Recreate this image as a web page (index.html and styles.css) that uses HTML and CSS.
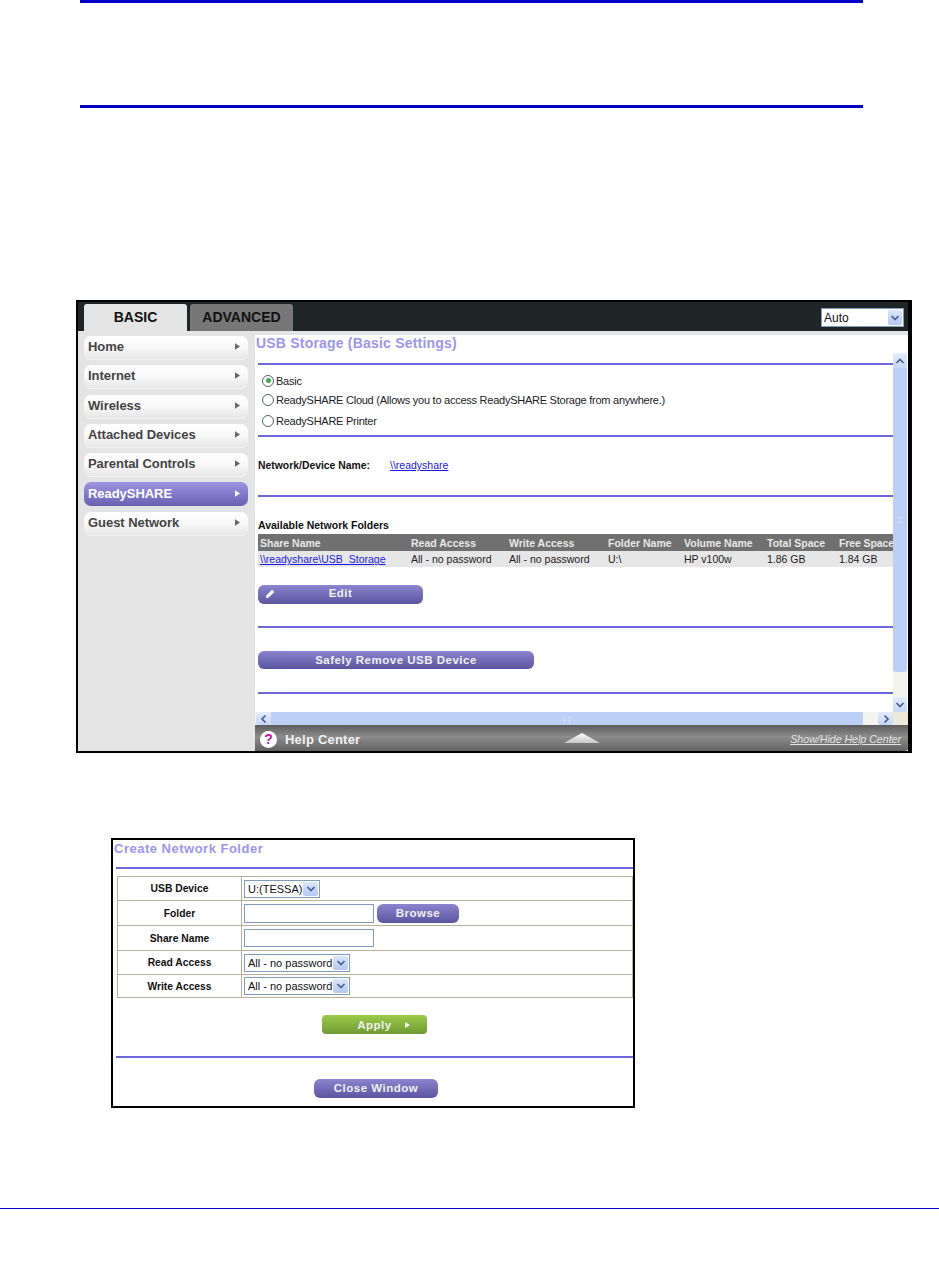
FILE: index.html
```html
<!DOCTYPE html>
<html lang="en">
<head>
<meta charset="utf-8">
<title>USB Storage (Basic Settings)</title>
<link rel="stylesheet" href="styles.css">
</head>
<body>
<svg class="defs" width="0" height="0" aria-hidden="true">
  <symbol id="down" viewBox="0 0 10 10"><path d="M1.500 3 5 6.500 8.500 3" fill="none" stroke="#44608e" stroke-width="1.700"/></symbol>
  <symbol id="up" viewBox="0 0 10 10"><path d="M1.500 7 5 3.500 8.500 7" fill="none" stroke="#44608e" stroke-width="1.700"/></symbol>
  <symbol id="left" viewBox="0 0 10 10"><path d="M6.500 1.500 3 5l3.500 3.500" fill="none" stroke="#44608e" stroke-width="1.700"/></symbol>
  <symbol id="right" viewBox="0 0 10 10"><path d="M3.500 1.500 7 5 3.500 8.500" fill="none" stroke="#44608e" stroke-width="1.700"/></symbol>
  <symbol id="tri" viewBox="0 0 6 8"><path d="M0 0 6 4 0 8z"/></symbol>
</svg>

<div class="note-box"></div>

<section class="window">
  <header class="topbar">
    <div class="tabs">
      <div class="tab tab-on">BASIC</div>
      <div class="tab tab-off">ADVANCED</div>
    </div>
    <div class="select select-auto"><span class="select-text">Auto</span><span class="select-btn"><svg class="chev"><use href="#down"/></svg></span></div>
  </header>
  <div class="shell">
    <nav class="side">
      <a class="nav">Home<svg class="nav-tri"><use href="#tri"/></svg></a>
      <a class="nav">Internet<svg class="nav-tri"><use href="#tri"/></svg></a>
      <a class="nav">Wireless<svg class="nav-tri"><use href="#tri"/></svg></a>
      <a class="nav">Attached Devices<svg class="nav-tri"><use href="#tri"/></svg></a>
      <a class="nav">Parental Controls<svg class="nav-tri"><use href="#tri"/></svg></a>
      <a class="nav nav-on">ReadySHARE<svg class="nav-tri"><use href="#tri"/></svg></a>
      <a class="nav">Guest Network<svg class="nav-tri"><use href="#tri"/></svg></a>
    </nav>
    <main class="main">
      <h1 class="title">USB Storage (Basic Settings)</h1>
      <div class="view">
        <div class="content">
          <hr class="rule rule-1">
          <div class="radio-row radio-basic"><span class="radio radio-on"></span>Basic</div>
          <div class="radio-row"><span class="radio"></span>ReadySHARE Cloud (Allows you to access ReadySHARE Storage from anywhere.)</div>
          <div class="radio-row radio-last"><span class="radio"></span>ReadySHARE Printer</div>
          <hr class="rule rule-2">
          <div class="device"><b class="device-label">Network/Device Name:</b><a class="link">\\readyshare</a></div>
          <hr class="rule rule-3">
          <h2 class="folders">Available Network Folders</h2>
          <div class="table-clip">
            <table class="grid">
              <colgroup><col class="c1"><col class="c2"><col class="c3"><col class="c4"><col class="c5"><col class="c6"><col class="c7"></colgroup>
              <thead><tr><th>Share Name</th><th>Read Access</th><th>Write Access</th><th>Folder Name</th><th>Volume Name</th><th>Total Space</th><th class="th-last">Free Space</th></tr></thead>
              <tbody><tr><td><a class="link">\\readyshare\USB_Storage</a></td><td>All - no password</td><td>All - no password</td><td>U:\</td><td>HP v100w</td><td>1.86 GB</td><td>1.84 GB</td></tr></tbody>
            </table>
          </div>
          <div class="btn btn-edit">
            <svg class="pencil" viewBox="0 0 12 12"><path d="M1 11l.8-3.400L7.800 1.600a1 1 0 0 1 1.400 0l1.200 1.200a1 1 0 0 1 0 1.400L4.400 10.200z" fill="#fff"/></svg>
            Edit
          </div>
          <hr class="rule rule-4">
          <div class="btn btn-remove">Safely Remove USB Device</div>
          <hr class="rule rule-5">
        </div>
        <div class="vscroll">
          <span class="sb-btn sb-v"><svg class="chev"><use href="#up"/></svg></span>
          <span class="vthumb"><i class="grip-v"></i></span>
          <span class="vtrack"></span>
          <span class="sb-btn sb-v"><svg class="chev"><use href="#down"/></svg></span>
        </div>
      </div>
      <div class="hscroll">
        <span class="sb-btn sb-h"><svg class="chev"><use href="#left"/></svg></span>
        <span class="hthumb"><i class="grip-h"></i></span>
        <span class="htrack"></span>
        <span class="sb-btn sb-h"><svg class="chev"><use href="#right"/></svg></span>
        <span class="corner"></span>
      </div>
      <footer class="help">
        <span class="help-icon">?</span>
        <b class="help-title">Help Center</b>
        <svg class="help-tri" viewBox="0 0 36 10"><path d="M0 10 18 0l18 10z" fill="url(#tg)"/><defs><linearGradient id="tg" x1="0" y1="0" x2="0" y2="1"><stop offset="0" stop-color="#fff"/><stop offset="1" stop-color="#c8c8c8"/></linearGradient></defs></svg>
        <a class="help-link">Show/Hide Help Center</a>
      </footer>
    </main>
  </div>
</section>

<section class="dialog">
  <h2 class="dialog-title">Create Network Folder</h2>
  <hr class="rule dialog-rule">
  <table class="form">
    <tr class="row-24"><th>USB Device</th><td><div class="select select-usb"><span class="select-text">U:(TESSA)</span><span class="select-btn"><svg class="chev"><use href="#down"/></svg></span></div></td></tr>
    <tr class="row-25"><th>Folder</th><td class="with-btn"><div class="input"></div><div class="btn btn-browse">Browse</div></td></tr>
    <tr class="row-25"><th>Share Name</th><td><div class="input"></div></td></tr>
    <tr class="row-24"><th>Read Access</th><td><div class="select select-acc"><span class="select-text">All - no password</span><span class="select-btn"><svg class="chev"><use href="#down"/></svg></span></div></td></tr>
    <tr class="row-23"><th>Write Access</th><td><div class="select select-acc"><span class="select-text">All - no password</span><span class="select-btn"><svg class="chev"><use href="#down"/></svg></span></div></td></tr>
  </table>
  <div class="btn btn-apply">Apply<svg class="apply-tri"><use href="#tri"/></svg></div>
  <hr class="rule dialog-rule-2">
  <div class="btn btn-close">Close Window</div>
</section>

<div class="page-foot"></div>
</body>
</html>
```

FILE: styles.css
```css
* { box-sizing: border-box; }
html, body { margin: 0; padding: 0; }
body {
  width: 939px;
  height: 1278px;
  background: #fff;
  font-family: "Liberation Sans", Arial, sans-serif;
  overflow: hidden;
}
.defs { display: block; height: 0; }

.note-box {
  width: 783px;
  height: 108px;
  margin: 0 0 0 80px;
  border-top: 3px solid #0000c8;
  border-bottom: 3px solid #0000c8;
}

/* Router window */
.window {
  width: 836px;
  height: 453px;
  margin: 192px 0 0 76px;
  border: solid #000;
  border-width: 2px 4px 2px 2px;
  display: flex;
  flex-direction: column;
}
.topbar {
  height: 29px;
  background: #1f2427;
  display: flex;
  justify-content: space-between;
  padding: 2px 4px 0 6px;
  flex: none;
}
.tabs { display: flex; gap: 3px; }
.tab {
  width: 103px;
  height: 27px;
  border-radius: 3px 3px 0 0;
  font-size: 14px;
  font-weight: 700;
  line-height: 26px;
  text-align: center;
  color: #111;
}
.tab-on { background: #e4e4e4; }
.tab-off { background: #777; }

.select {
  display: flex;
  align-items: center;
  background: #fff;
  border: 1px solid #7f9db9;
  font-size: 12px;
  color: #111;
}
.select-text { flex: 1; padding-left: 2px; white-space: nowrap; }
.select-btn {
  width: 15px;
  align-self: stretch;
  margin: 1px;
  background: linear-gradient(#dbe6fb, #b4c8f2);
  border-radius: 2px;
  display: flex;
  align-items: center;
  justify-content: center;
}
.chev { width: 10px; height: 10px; display: block; }
.select-auto { width: 83px; height: 19px; margin-top: 4px; }
.select-auto .select-btn { width: 14px; }

.shell { flex: 1; display: flex; min-height: 0; }

/* Sidebar */
.side {
  width: 177px;
  flex: none;
  background: #e4e4e4;
  padding: 5px 7px 0 6px;
  display: flex;
  flex-direction: column;
  gap: 5.300px;
}
.nav {
  height: 24px;
  border-radius: 7px;
  background: linear-gradient(#fff 0%, #f8f8f8 50%, #e6e6e6 100%);
  border-bottom: 1px solid #f4f4f4;
  display: flex;
  align-items: center;
  justify-content: space-between;
  padding: 0 8px 2px 4px;
  font-size: 13px;
  font-weight: 700;
  letter-spacing: -.05px;
  color: #444;
}
.nav-tri { width: 5px; height: 7px; fill: #666; }
.nav-on {
  background: linear-gradient(#9d94e2, #6a60b2);
  border-bottom: 0;
  color: #fff;
}
.nav-on .nav-tri { fill: #fff; }

/* Main */
.main {
  flex: 1;
  min-width: 0;
  border-top: 4px solid #e4e4e4;
  background: #fff;
  display: flex;
  flex-direction: column;
}
.title {
  height: 18px;
  margin: 0;
  padding-left: 1px;
  flex: none;
  font-size: 14px;
  font-weight: 700;
  line-height: 16px;
  letter-spacing: .2px;
  color: #9c95f2;
}
.view { height: 359px; flex: none; display: flex; }
.content { width: 638px; padding-left: 3px; overflow: hidden; }

.rule {
  height: 2px;
  margin: 0;
  border: 0;
  background: #6f68dc;
}
.rule-1 { margin-top: 10px; }
.rule-2 { margin-top: 5px; }
.rule-3 { margin-top: 58px; }
.rule-4 { margin-top: 22px; }
.rule-5 { margin-top: 23px; }

.radio-row {
  height: 20px;
  display: flex;
  align-items: center;
  padding-left: 4px;
  font-size: 11px;
  letter-spacing: -.25px;
  color: #222;
}
.radio-basic { margin-top: 6px; height: 19px; }
.radio-last { height: 19px; margin-top: 1px; }
.radio {
  width: 12px;
  height: 12px;
  margin-right: 2px;
  border-radius: 50%;
  border: 1px solid #4d6272;
  background: #fff;
  flex: none;
  display: flex;
  align-items: center;
  justify-content: center;
}
.radio-on::after {
  content: "";
  width: 5px;
  height: 5px;
  border-radius: 50%;
  background: #3fa84f;
}

.device {
  height: 58px;
  margin-bottom: -58px;
  display: flex;
  align-items: center;
  font-size: 10.500px;
  color: #111;
  position: relative;
  top: -1px;
}
.device-label { width: 132px; font-size: 10.400px; flex: none; }
.link { color: #1a1ae6; text-decoration: underline; }
.device .link { font-size: 10.500px; }

.folders {
  margin: 22px 0 0;
  height: 15px;
  font-size: 10.500px;
  font-weight: 700;
  line-height: 13px;
  color: #111;
}
.table-clip { width: 636px; margin-top: 0; overflow: hidden; }
.grid {
  width: 640px;
  table-layout: fixed;
  border-collapse: collapse;
  font-size: 11px;
}
.c1 { width: 151px; }
.c2 { width: 98px; }
.c3 { width: 99px; }
.c4 { width: 76px; }
.c5 { width: 83px; }
.c6 { width: 72px; }
.c7 { width: 61px; }
.grid th {
  height: 17px;
  padding: 0 0 0 2px;
  background: #707070;
  color: #e8e8e8;
  font-size: 10.500px;
  font-weight: 700;
  text-align: left;
  white-space: nowrap;
}
.grid .th-last { letter-spacing: -.1px; }
.grid td {
  height: 16px;
  padding: 0 0 0 2px;
  background: #e6e6e6;
  color: #222;
  font-size: 10.500px;
  white-space: nowrap;
}

.btn {
  display: flex;
  align-items: center;
  justify-content: center;
  border-radius: 6px;
  background: linear-gradient(#8c84cf, #5b549f);
  color: #f0f0f0;
  font-size: 11.500px;
  font-weight: 700;
  letter-spacing: .5px;
}
.btn-edit {
  width: 165px;
  height: 19px;
  margin-top: 18px;
  position: relative;
  padding-bottom: 3px;
}
.pencil { position: absolute; left: 7px; top: 4px; width: 10px; height: 10px; }
.btn-remove { width: 276px; height: 18px; margin-top: 23px; }

/* Scrollbars */
.vscroll { width: 14px; flex: none; display: flex; flex-direction: column; background: #f4f4ee; }
.sb-btn {
  background: linear-gradient(#e4ecfc, #c6d6f6);
  display: flex;
  align-items: center;
  justify-content: center;
  border-radius: 2px;
  flex: none;
}
.sb-v { height: 15px; }
.sb-h { width: 15px; height: 13px; }
.vthumb {
  height: 304px;
  background: #bcd0f7;
  border-radius: 0 0 3px 3px;
  display: flex;
  align-items: center;
  justify-content: center;
  flex: none;
}
.grip-v { width: 6px; height: 6px; border-top: 1px solid #d8e4fb; border-bottom: 1px solid #d8e4fb; }
.vtrack { flex: 1; }
.hscroll { height: 13px; flex: none; display: flex; background: #f4f4ee; padding-left: 1px; }
.hthumb {
  width: 592px;
  background: #bcd0f7;
  display: flex;
  align-items: center;
  justify-content: center;
}
.grip-h { width: 6px; height: 6px; border-left: 1px solid #d8e4fb; border-right: 1px solid #d8e4fb; }
.htrack { flex: 1; }
.corner { width: 15px; background: #ece9d8; }

/* Help bar */
.help {
  flex: 1;
  display: flex;
  align-items: center;
  position: relative;
  padding: 2px 7px 0 5px;
  background: linear-gradient(#5c5c5c, #8c8c8c 45%, #626262);
  border-radius: 0 0 3px 0;
}
.help-icon {
  width: 17px;
  height: 17px;
  border-radius: 50%;
  background: #fff;
  color: #c4169a;
  font-size: 14px;
  font-weight: 700;
  line-height: 17px;
  text-align: center;
  flex: none;
}
.help-title {
  margin-left: 8px;
  font-size: 13px;
  letter-spacing: .22px;
  color: #f2f2f2;
}
.help-tri { position: absolute; left: 309px; top: 8px; width: 36px; height: 10px; }
.help-link {
  margin-left: auto;
  font-size: 10.600px;
  font-style: italic;
  text-decoration: underline;
  color: #e4e4e4;
}

/* Dialog */
.dialog {
  width: 524px;
  height: 270px;
  margin: 85px 0 0 111px;
  border: 2px solid #000;
  background: #fff;
}
.dialog-title {
  height: 17px;
  margin: 0;
  padding-left: 1px;
  font-size: 13px;
  font-weight: 700;
  line-height: 18px;
  letter-spacing: .5px;
  color: #9c95f2;
}
.dialog-rule { margin: 10px 0 0 3px; }
.form {
  width: 516px;
  margin: 7px 0 0 4px;
  border-collapse: collapse;
  table-layout: fixed;
}
.form th, .form td {
  padding: 0;
  border: 1px solid #b5b09a;
}
.row-23 th { height: 23px; }
.row-24 th { height: 24px; }
.row-25 th { height: 25px; }
.form th {
  width: 124px;
  font-size: 10.300px;
  font-weight: 700;
  color: #111;
}
.form td { padding-left: 2px; }
.with-btn > .input, .with-btn > .btn { display: inline-flex; vertical-align: middle; }
.input {
  display: block;
  width: 130px;
  height: 18px;
  border: 1px solid #7f9db9;
  background: #fff;
}
.with-btn > .input { height: 19px; }
.btn-browse {
  width: 82px;
  height: 19px;
  margin-left: 3px;
  font-size: 11.500px;
}
.select-usb { width: 76px; height: 18px; }
.select-acc { width: 106px; height: 18px; }
.form .select { font-size: 11px; }
.form .select-text { padding-left: 3px; }
.btn-apply {
  width: 105px;
  height: 19px;
  margin: 17px 0 0 209px;
  position: relative;
  background: linear-gradient(#9ccb4a, #6f9a33);
  border-radius: 4px;
}
.apply-tri { position: absolute; right: 17px; top: 7px; width: 5px; height: 6px; fill: #fff; }
.dialog-rule-2 { margin: 22px 0 0 3px; }
.btn-close {
  width: 124px;
  height: 19px;
  margin: 21px 0 0 201px;
  padding-bottom: 2px;
}

.page-foot {
  width: 939px;
  height: 1px;
  margin-top: 100px;
  background: #0000c8;
}
```
